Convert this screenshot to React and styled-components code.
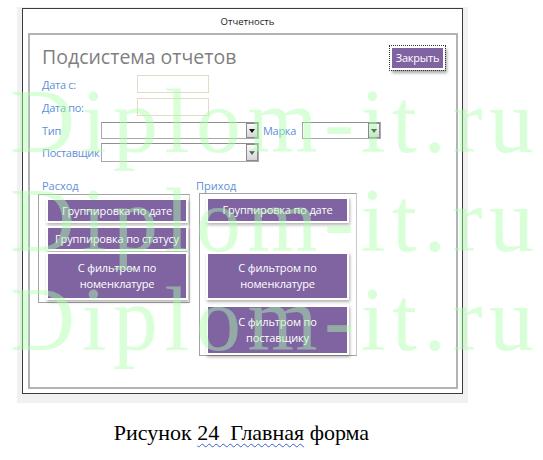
import React from "react";
import styled, { createGlobalStyle } from "styled-components";

const GlobalStyle = createGlobalStyle`
  html, body {
    margin: 0;
    padding: 0;
    background: #ffffff;
  }
  * {
    box-sizing: border-box;
  }
`;

const expense = [
  { title: "Группировка по дате", h: 21, gap: 0, line: true },
  { title: "Группировка по статусу", h: 21, gap: 7, line: true },
  { title: "С фильтром по номенклатуре", h: 44, gap: 5 },
];

const income = [
  { title: "Группировка по дате", h: 22, gap: 0, line: true },
  { title: "С фильтром по номенклатуре", h: 44, gap: 33 },
  { title: "С фильтром по поставщику", h: 46, gap: 9 },
];

function Combo({ width, dim }) {
  return (
    <ComboBox $width={width}>
      <DropButton>
        <Arrow $dim={dim} />
      </DropButton>
    </ComboBox>
  );
}

function App() {
  return (
    <Page>
      <GlobalStyle />
      <Window>
        <TitleBar>Отчетность</TitleBar>
        <Panel>
          <Header>
            <Heading>Подсистема отчетов</Heading>
            <CloseButton>Закрыть</CloseButton>
          </Header>

          <Row $top={4} $h={18}>
            <Label $width={95}>Дата с:</Label>
            <DateInput />
          </Row>
          <Row $top={5} $h={18}>
            <Label $width={95}>Дата по:</Label>
            <DateInput />
          </Row>
          <Row $top={6} $h={17}>
            <Label $width={59}>Тип</Label>
            <Combo width={158} />
            <Label $width={39} $left={4}>
              Марка
            </Label>
            <Combo width={79} />
          </Row>
          <Row $top={4} $h={19}>
            <Label $width={59}>Поставщик</Label>
            <Combo width={158} dim />
          </Row>

          <Groups>
            <Column $width={152}>
              <GroupLabel $indent={4}>Расход</GroupLabel>
              <GroupBox $width={152} $top={1} $pad="5px 3px 4px 9px">
                {expense.map((b) => (
                  <ReportButton key={b.title} $h={b.h} $gap={b.gap} $line={b.line}>
                    {b.title}
                  </ReportButton>
                ))}
              </GroupBox>
            </Column>
            <Column $width={161}>
              <GroupLabel $indent={0}>Приход</GroupLabel>
              <GroupBox $width={158} $left={3} $pad="5px 9px 2px 8px">
                {income.map((b) => (
                  <ReportButton key={b.title} $h={b.h} $gap={b.gap} $line={b.line}>
                    {b.title}
                  </ReportButton>
                ))}
              </GroupBox>
            </Column>
          </Groups>
        </Panel>
      </Window>

      <Caption>
        Рисунок <Marked>24  Главная</Marked> форма
      </Caption>

      <Watermark>
        <div>Diplom-it.ru</div>
        <div>Diplom-it.ru</div>
        <div>Diplom-it.ru</div>
      </Watermark>
    </Page>
  );
}

export default App;

const Page = styled.div`
  position: relative;
  width: 543px;
  height: 460px;
  padding-top: 8px;
  overflow: hidden;
`;

const Window = styled.div`
  display: flex;
  flex-direction: column;
  margin-left: 22px;
  width: 441px;
  height: 386px;
  border: 1px solid #3c3c3c;
  background: #ffffff;
  box-shadow: 0 4px 0 5px #f1f1f1;
`;

const TitleBar = styled.div`
  height: 24px;
  line-height: 26px;
  padding-left: 10px;
  text-align: center;
  font-family: "Open Sans", "Noto Sans", sans-serif;
  font-size: 9.5px;
  color: #222222;
`;

const Panel = styled.div`
  flex: 1;
  margin: 0 4px 4px 5px;
  border: 2px solid #b2b3b8;
  padding: 8px 10px 0 12px;
  font-family: "Open Sans", "Noto Sans", sans-serif;
`;

const Header = styled.div`
  display: flex;
  align-items: center;
  justify-content: space-between;
  height: 28px;
`;

const Heading = styled.h1`
  margin: 0;
  font-size: 19.5px;
  font-weight: 400;
  color: #7f7f7f;
  line-height: 28px;
`;

const CloseButton = styled.button`
  width: 51px;
  height: 20px;
  margin-right: 3px;
  margin-top: 2px;
  padding: 0;
  border: none;
  background: #8064a2;
  color: #ffffff;
  font-family: "Open Sans", "Noto Sans", sans-serif;
  font-size: 11px;
  letter-spacing: -0.2px;
  line-height: 20px;
  box-shadow: 0 0 0 2px #ffffff, 2px 3px 3px 2px rgba(0, 0, 0, 0.35);
  outline: 1px dotted #333333;
  outline-offset: 2px;
`;

const Row = styled.div`
  display: flex;
  align-items: center;
  height: ${(p) => p.$h}px;
  margin-top: ${(p) => p.$top}px;
`;

const Label = styled.span`
  flex: none;
  width: ${(p) => p.$width}px;
  margin-left: ${(p) => p.$left || 0}px;
  font-size: 11px;
  letter-spacing: -0.3px;
  color: #5d8fd7;
  white-space: nowrap;
`;

const DateInput = styled.div`
  width: 72px;
  height: 100%;
  border: 1px solid #e4dac5;
  background: #ffffff;
`;

const ComboBox = styled.div`
  flex: none;
  display: flex;
  justify-content: flex-end;
  width: ${(p) => p.$width}px;
  height: 100%;
  border: 1px solid #a8a8a8;
  border-top-color: #8f8f8f;
  background: #ffffff;
`;

const DropButton = styled.div`
  display: flex;
  align-items: center;
  justify-content: center;
  width: 12px;
  height: 100%;
  border: 1px solid #8a8a8a;
  background: linear-gradient(#fbfbfb, #d6d6d6);
`;

const Arrow = styled.span`
  width: 0;
  height: 0;
  border-left: 3.5px solid transparent;
  border-right: 3.5px solid transparent;
  border-top: 4px solid ${(p) => (p.$dim ? "#5a5a5a" : "#111111")};
`;

const Groups = styled.div`
  display: flex;
  gap: 6px;
  margin-top: 17px;
  margin-left: -4px;
`;

const Column = styled.div`
  display: flex;
  flex-direction: column;
  width: ${(p) => p.$width}px;
`;

const GroupLabel = styled.div`
  height: 14px;
  line-height: 14px;
  padding-left: ${(p) => p.$indent}px;
  font-size: 11px;
  color: #5d8fd7;
`;

const GroupBox = styled.div`
  display: flex;
  flex-direction: column;
  width: ${(p) => p.$width}px;
  margin-top: ${(p) => p.$top || 0}px;
  margin-left: ${(p) => p.$left || 0}px;
  padding: ${(p) => p.$pad};
  border: 1px solid #a3a3a3;
  border-right-color: #c8c8c8;
`;

const ReportButton = styled.div`
  display: flex;
  align-items: center;
  justify-content: center;
  height: ${(p) => p.$h}px;
  margin-top: ${(p) => p.$gap}px;
  padding: ${(p) => (p.$line ? "0 2px" : "0 14px")};
  background: #8064a2;
  color: #ffffff;
  font-size: 11px;
  letter-spacing: -0.15px;
  line-height: 16px;
  text-align: center;
  white-space: ${(p) => (p.$line ? "nowrap" : "normal")};
  box-shadow: 0 0 0 2px #ffffff, 1px 2px 3px 2px rgba(0, 0, 0, 0.3);
`;

const Caption = styled.div`
  width: 483px;
  margin-top: 27px;
  text-align: center;
  font-family: "Liberation Serif", "Times New Roman", serif;
  font-size: 22px;
  line-height: 24px;
  color: #000000;
`;

const Marked = styled.span`
  white-space: pre;
  text-decoration: underline wavy #3a5fd0;
  text-decoration-thickness: 1px;
  text-underline-offset: 3px;
`;

const Watermark = styled.div`
  position: absolute;
  top: 72px;
  left: 10px;
  pointer-events: none;
  font-family: "Liberation Serif", "Times New Roman", serif;
  font-size: 90px;
  line-height: 99px;
  letter-spacing: 6.5px;
  white-space: nowrap;
  color: rgba(170, 255, 170, 0.45);
`;
